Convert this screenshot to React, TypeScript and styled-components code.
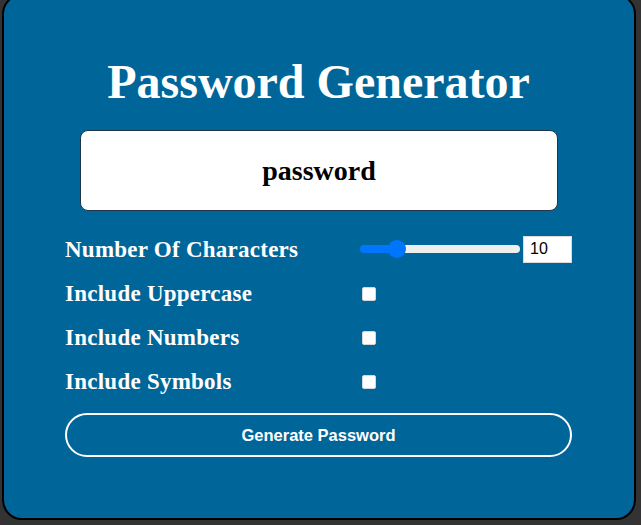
import React, { useState } from "react";
import styled, { createGlobalStyle } from "styled-components";

const GlobalStyle = createGlobalStyle`
  html, body {
    margin: 0;
    padding: 0;
    background: #333333;
    overflow: hidden;
  }
  * { box-sizing: border-box; }
`;

const Page = styled.div`
  width: 641px;
  height: 525px;
  padding: 0 5px 0 2px;
  overflow: hidden;
`;

const Card = styled.main`
  margin-top: -6px;
  height: 526px;
  background: #006699;
  border: 2px solid #000000;
  border-radius: 20px;
  padding: 59px 62px 0 61px;
  display: flex;
  flex-direction: column;
  align-items: stretch;
`;

const Title = styled.h1`
  margin: 0 0 22px;
  font-family: "Liberation Serif", serif;
  font-weight: 700;
  font-size: 48px;
  line-height: 53px;
  color: #ffffff;
  text-align: center;
`;

const Display = styled.div`
  margin: 0 14px 0 15px;
  height: 81px;
  background: #ffffff;
  border: 1px solid #1f3446;
  border-radius: 8px;
  display: flex;
  align-items: center;
  justify-content: center;
  font-family: "Liberation Serif", serif;
  font-weight: 700;
  font-size: 28px;
  color: #000000;
`;

const Options = styled.div`
  margin-top: 16px;
  display: grid;
  grid-template-columns: 295px 1fr;
  grid-auto-rows: 44px;
  align-items: center;
`;

const Label = styled.label`
  font-family: "Liberation Serif", serif;
  font-weight: 700;
  font-size: 23px;
  letter-spacing: 0.25px;
  line-height: 26px;
  color: #ffffff;
  padding-top: 1px;
`;

const Control = styled.div`
  display: flex;
  align-items: center;
  gap: 3px;
`;

const Range = styled.input`
  -webkit-appearance: none;
  appearance: none;
  width: 160px;
  height: 8px;
  margin: 0;
  border-radius: 4px;
  outline: none;

  &::-webkit-slider-thumb {
    -webkit-appearance: none;
    appearance: none;
    width: 18px;
    height: 18px;
    border-radius: 50%;
    background: #0075ff;
    border: none;
  }
`;

const NumberBox = styled.input`
  width: 49px;
  height: 27px;
  margin: 0;
  padding: 0 0 0 6px;
  border: 1px solid #dcdcdc;
  background: #ffffff;
  font-family: "Liberation Sans", Arial, sans-serif;
  font-size: 16px;
  color: #000000;
  outline: none;
  -moz-appearance: textfield;

  &::-webkit-inner-spin-button,
  &::-webkit-outer-spin-button {
    -webkit-appearance: none;
    margin: 0;
  }
`;

const Check = styled.input`
  -webkit-appearance: none;
  appearance: none;
  width: 14px;
  height: 14px;
  margin: 1px 0 0 2px;
  background: #ffffff;
  border: 1px solid #d6d6d6;
  border-radius: 2px;
`;

const GenerateButton = styled.button`
  margin-top: 10px;
  height: 44px;
  background: transparent;
  border: 2px solid #ffffff;
  border-radius: 22px;
  color: #ffffff;
  font-family: "Liberation Sans", Arial, sans-serif;
  font-weight: 700;
  font-size: 16.5px;
  cursor: pointer;
`;

export default function App() {
  const [length, setLength] = useState(10);
  const min = 0;
  const max = 50;
  const pct = ((length - min) / (max - min)) * 100;
  const fillStop = `calc(9px + (100% - 18px) * ${pct / 100})`;

  return (
    <>
      <GlobalStyle />
      <Page>
        <Card>
          <Title>Password Generator</Title>
          <Display>password</Display>
          <Options>
            <Label htmlFor="len">Number Of Characters</Label>
            <Control>
              <Range
                id="len"
                type="range"
                min={min}
                max={max}
                value={length}
                onChange={(e) => setLength(Number(e.target.value))}
                style={{
                  background: `linear-gradient(to right, #0075ff 0, #0075ff ${fillStop}, #efefef ${fillStop}, #efefef 100%)`,
                }}
              />
              <NumberBox
                type="number"
                min={min}
                max={max}
                value={length}
                onChange={(e) => setLength(Number(e.target.value))}
              />
            </Control>
            <Label htmlFor="upper">Include Uppercase</Label>
            <Control>
              <Check id="upper" type="checkbox" />
            </Control>
            <Label htmlFor="nums">Include Numbers</Label>
            <Control>
              <Check id="nums" type="checkbox" />
            </Control>
            <Label htmlFor="syms">Include Symbols</Label>
            <Control>
              <Check id="syms" type="checkbox" />
            </Control>
          </Options>
          <GenerateButton type="button">Generate Password</GenerateButton>
        </Card>
      </Page>
    </>
  );
}
